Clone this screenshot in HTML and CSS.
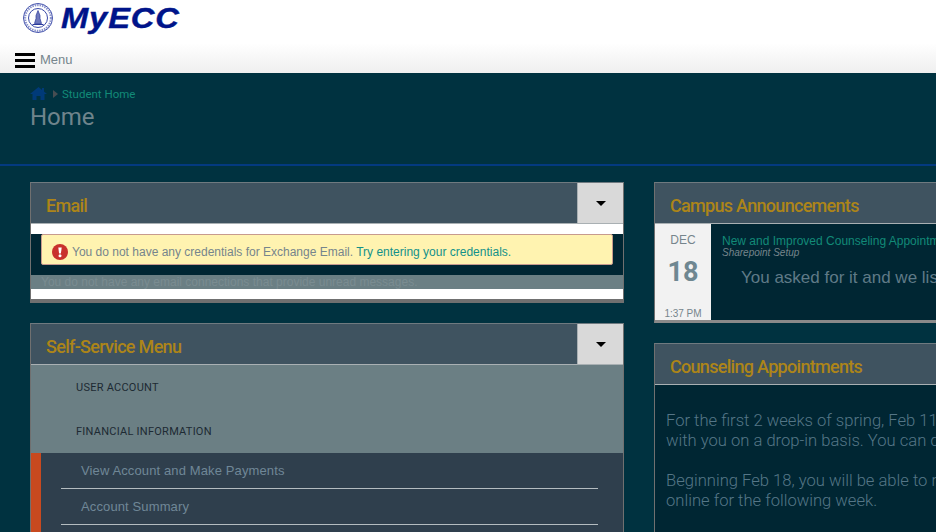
FILE: index.html
```html
<!DOCTYPE html>
<html lang="en">
<head>
<meta charset="utf-8">
<title>MyECC</title>
<link rel="stylesheet" href="styles.css">
</head>
<body>
<header class="brand">
  <svg class="seal" width="32" height="32" viewBox="0 0 32 32" aria-hidden="true">
    <circle cx="16" cy="16" r="14.5" fill="#fff" stroke="#3a4aa8" stroke-width="1"/>
    <circle cx="16" cy="16" r="13" fill="none" stroke="#8a93cc" stroke-width="2.4" stroke-dasharray="1.5 1"/>
    <circle cx="16" cy="16" r="9.5" fill="#fff" stroke="#3a4aa8" stroke-width="1"/>
    <path d="M16 8.500l2 5v3l1.500 5h-7l1.500-5v-3z" fill="#6f79bd" stroke="#2a3a9c" stroke-width=".7"/>
    <path d="M10.500 22.500h11" stroke="#2a3a9c" stroke-width="1"/>
  </svg>
  <span class="logo-text">MyECC</span>
</header>
<nav class="menubar">
  <span class="burger"><i></i><i></i><i></i></span>
  <span class="menu-label">Menu</span>
</nav>
<section class="hero">
  <div class="crumbs">
    <svg class="home" width="17" height="14" viewBox="0 0 17 14" aria-hidden="true">
      <path d="M8.500 0L0 7h2.500v6h4V9h4v4h4V7H17l-3-2.500V1h-2v2z" fill="#003a78"/>
    </svg>
    <span class="crumb-sep"></span>
    <span class="crumb">Student Home</span>
  </div>
  <h1 class="page-title">Home</h1>
</section>
<main class="columns">
  <div class="col">
    <section class="panel email-panel">
      <div class="panel-head">
        <h2 class="panel-title">Email</h2>
        <button class="toggle" type="button"><span class="caret"></span></button>
      </div>
      <div class="email-body">
        <div class="email-dark">
          <div class="alert">
            <svg class="alert-icon" width="16" height="16" viewBox="0 0 16 16" aria-hidden="true">
              <circle cx="8" cy="8" r="8" fill="#c9302c"/>
              <path d="M6.300 3.500h3.400L8.900 9.500H7.100z" fill="#fff"/>
              <circle cx="8" cy="11.800" r="1.500" fill="#fff"/>
            </svg>
            <span>You do not have any credentials for Exchange Email. <a class="alert-link">Try entering your credentials.</a></span>
          </div>
        </div>
        <p class="email-note">You do not have any email connections that provide unread messages.</p>
      </div>
    </section>
    <section class="panel menu-panel">
      <div class="panel-head">
        <h2 class="panel-title">Self-Service Menu</h2>
        <button class="toggle" type="button"><span class="caret"></span></button>
      </div>
      <div class="menu-groups">
        <div class="menu-group">USER ACCOUNT</div>
        <div class="menu-group">FINANCIAL INFORMATION</div>
      </div>
      <ul class="menu-list">
        <li class="menu-item">View Account and Make Payments</li>
        <li class="menu-item">Account Summary</li>
      </ul>
    </section>
  </div>
  <div class="col">
    <section class="panel announce-panel">
      <div class="panel-head">
        <h2 class="panel-title">Campus Announcements</h2>
      </div>
      <div class="announce">
        <div class="date">
          <span class="date-month">DEC</span>
          <span class="date-day">18</span>
          <span class="date-time">1:37 PM</span>
        </div>
        <div class="announce-body">
          <a class="announce-link">New and Improved Counseling Appointments</a>
          <em class="announce-src">Sharepoint Setup</em>
          <p class="announce-text">You asked for it and we listened</p>
        </div>
      </div>
    </section>
    <section class="panel counsel-panel">
      <div class="panel-head">
        <h2 class="panel-title">Counseling Appointments</h2>
      </div>
      <div class="counsel-body">
        <p>For the first 2 weeks of spring, Feb 11<br>with you on a drop-in basis. You can drop in</p>
        <p>Beginning Feb 18, you will be able to make<br>online for the following week.</p>
      </div>
    </section>
  </div>
</main>
</body>
</html>
```
FILE: styles.css
```css
* { box-sizing: border-box; }
html, body { height: 100%; }
body {
  margin: 0;
  overflow: hidden;
  background: #003240;
  font-family: "Liberation Sans", Arial, sans-serif;
  width: 936px;
  height: 532px;
}
p, h1, h2, ul { margin: 0; padding: 0; }
ul { list-style: none; }

.brand {
  height: 43px;
  background: #fff;
  display: flex;
  align-items: flex-start;
  padding: 2px 0 0 22px;
  gap: 7px;
}
.seal { flex: none; }
.logo-text {
  font: italic 700 30px/32px "Liberation Sans", Arial, sans-serif;
  color: #00148a;
  letter-spacing: .8px;
  -webkit-text-stroke: .4px #00148a;
  transform: scaleX(1.09);
  transform-origin: left center;
}
.menubar {
  height: 30px;
  background: linear-gradient(#fff, #efefef);
  display: flex;
  align-items: flex-start;
  padding: 10px 0 0 15px;
  gap: 5px;
}
.burger {
  width: 20px;
  display: flex;
  flex-direction: column;
  gap: 3px;
}
.burger i { display: block; height: 3px; background: #000; }
.menu-label {
  font-size: 13px;
  line-height: 13px;
  color: #76858c;
}

.hero {
  height: 93px;
  border-bottom: 2px solid #033a80;
  padding: 13px 0 0 30px;
}
.crumbs {
  display: flex;
  align-items: center;
  height: 16px;
}
.home { flex: none; }
.crumb-sep {
  width: 0;
  height: 0;
  margin: 0 4px 0 6px;
  border-left: 5px solid #474d52;
  border-top: 4px solid transparent;
  border-bottom: 4px solid transparent;
}
.crumb {
  font: 11.500px/16px Roboto, sans-serif;
  color: #128a78;
}
.page-title {
  font: 400 24px/30px Roboto, sans-serif;
  color: #6f848c;
}

.columns {
  display: grid;
  grid-template-columns: 594px 600px;
  column-gap: 30px;
  padding: 16px 0 0 30px;
  align-items: start;
}
.col {
  display: flex;
  flex-direction: column;
  gap: 20px;
}
.panel {
  border: 1px solid #707070;
  border-top-color: #6f7a80;
}
.panel-head {
  height: 41px;
  background: #3f5360;
  border-bottom: 1px solid #a9b0b3;
  display: flex;
  justify-content: space-between;
  align-items: stretch;
}
.panel-title {
  font: 500 18px/45px Roboto, sans-serif;
  letter-spacing: -.7px;
  color: #ad8518;
  padding-left: 15px;
}
.toggle {
  width: 46px;
  padding: 0;
  border: 0;
  border-left: 1px solid #a9b0b3;
  background: #d9d9d9;
  display: flex;
  align-items: center;
  justify-content: center;
}
.caret {
  width: 0;
  height: 0;
  border-top: 5px solid #000;
  border-left: 5px solid transparent;
  border-right: 5px solid transparent;
}

.email-body {
  background: #fff;
  padding: 10px 0;
}
.email-dark {
  background: #002633;
  height: 41px;
  padding-left: 10px;
  padding-right: 10px;
}
.alert {
  height: 31px;
  background: #fff3b0;
  border: 1px solid #c79a8e;
  border-radius: 2px;
  display: flex;
  align-items: center;
  gap: 4px;
  padding: 5px 0 0 10px;
  font-size: 12px;
  color: #76858c;
}
.alert-icon { flex: none; }
.alert-link { color: #13918a; }
.email-note {
  height: 14px;
  background: #6b7f84;
  color: #7a8c91;
  font-size: 12px;
  line-height: 14px;
  padding-left: 10px;
}
.email-panel { border-bottom-width: 4px; }

.menu-groups { background: #6b7f84; }
.menu-group {
  height: 44px;
  font: 400 11px/46px Roboto, sans-serif;
  color: #1d2a33;
  padding-left: 45px;
  letter-spacing: .25px;
}
.menu-list {
  background: #2f3f4d;
  border-left: 10px solid #c8491f;
  padding: 0 25px 40px 20px;
}
.menu-item {
  height: 36px;
  line-height: 36px;
  border-bottom: 1px solid #b4bcc0;
  padding-left: 20px;
  font-size: 13px;
  color: #6f8797;
  letter-spacing: .12px;
}

.announce {
  display: flex;
  height: 96px;
  background: #002633;
}
.date {
  width: 56px;
  flex: none;
  background: #f2f2f2;
  display: flex;
  flex-direction: column;
  align-items: center;
  color: #76858c;
}
.date-month { font-size: 12px; line-height: 13px; margin-top: 10px; }
.date-day {
  font: 700 27px/30px Roboto, sans-serif;
  color: #6f8791;
  margin-top: 10px;
}
.date-time { font-size: 10px; line-height: 12px; margin-top: auto; }
.announce-body {
  padding: 10px 0 0 11px;
  white-space: nowrap;
  display: flex;
  flex-direction: column;
  align-items: flex-start;
}
.announce-link { font-size: 12px; line-height: 14px; color: #128a78; }
.announce-src { font-size: 10px; line-height: 10px; color: #76858c; }
.announce-text {
  font-size: 17px;
  line-height: 20px;
  color: #5f7a87;
  padding: 10px 0 0 19px;
}
.announce-panel { border-bottom-width: 3px; border-bottom-color: #8a8a8a; }

.counsel-body {
  background: #002633;
  padding: 26px 0 40px 11px;
  font: 300 16.600px/20px Roboto, sans-serif;
  color: #557687;
  white-space: nowrap;
}
.counsel-body p + p { margin-top: 20px; }
```
